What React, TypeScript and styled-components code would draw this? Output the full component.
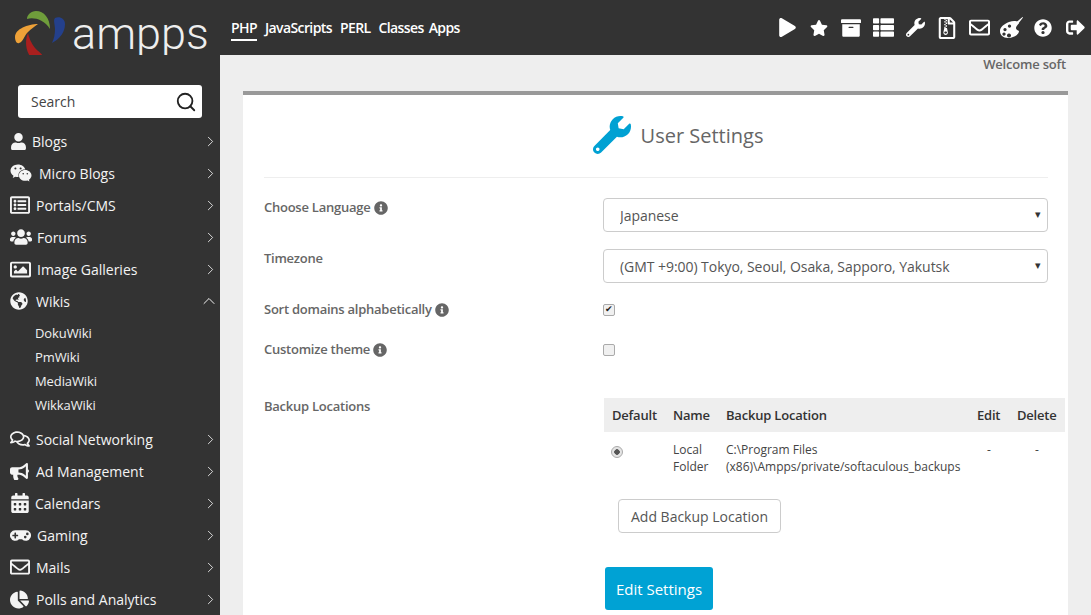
import React from 'react'
import styled, { createGlobalStyle } from 'styled-components'
import { ChevronRight, ChevronUp, Search } from 'lucide-react'
import {
    FaArchive,
    FaBullhorn,
    FaCalendarAlt,
    FaChartPie,
    FaGamepad,
    FaGlobeAmericas,
    FaInfoCircle,
    FaPlay,
    FaQuestionCircle,
    FaRegComments,
    FaRegEnvelope,
    FaRegFileArchive,
    FaRegImage,
    FaRegListAlt,
    FaSignOutAlt,
    FaStar,
    FaThList,
    FaUser,
    FaUsers,
    FaWeixin,
    FaWrench,
} from 'react-icons/fa'

const GlobalStyle = createGlobalStyle`
    html, body {
        margin: 0;
        height: 100%;
        overflow: hidden;
        background: #eeeeee;
        font-family: 'Open Sans', sans-serif;
    }
    * {
        box-sizing: border-box;
    }
`

const PaletteIcon = ({ size }: { size: number }) => (
    <svg width={size} height={size} viewBox="0 0 24 24" fill="currentColor">
        <path
            fillRule="evenodd"
            d="M10 6 C15 4 19 5 20 7 C19 9 17 10 17 12 C17 14 19 14 20 15 C20 19 14 22 9 22 C4 22 1 19 1 15 C1 11 5 8 10 6 Z M6 12 a1.6 1.6 0 1 0 0.01 0 Z M10.5 8.5 a1.6 1.6 0 1 0 0.01 0 Z M5 16.5 a1.6 1.6 0 1 0 0.01 0 Z M10 17.5 a2 2 0 1 0 0.01 0 Z"
        />
        <path d="M23.5 1 L24 1.6 L19 8 L16.5 7 Z" />
    </svg>
)

const topLinks = ['PHP', 'JavaScripts', 'PERL', 'Classes', 'Apps']

const topIcons = [
    { Icon: FaPlay, size: 19 },
    { Icon: FaStar, size: 18 },
    { Icon: FaArchive, size: 20 },
    { Icon: FaThList, size: 21 },
    { Icon: FaWrench, size: 19 },
    { Icon: FaRegFileArchive, size: 22 },
    { Icon: FaRegEnvelope, size: 21 },
    { Icon: PaletteIcon, size: 24 },
    { Icon: FaQuestionCircle, size: 18 },
    { Icon: FaSignOutAlt, size: 19 },
]

const upperMenu = [
    { label: 'Blogs', Icon: FaUser, size: 17, slot: 22 },
    { label: 'Micro Blogs', Icon: FaWeixin, size: 22, slot: 29 },
    { label: 'Portals/CMS', Icon: FaRegListAlt, size: 20, slot: 26 },
    { label: 'Forums', Icon: FaUsers, size: 22, slot: 27 },
    { label: 'Image Galleries', Icon: FaRegImage, size: 21, slot: 27 },
]

const wikiLinks = ['DokuWiki', 'PmWiki', 'MediaWiki', 'WikkaWiki']

const lowerMenu = [
    { label: 'Social Networking', Icon: FaRegComments, size: 20, slot: 26 },
    { label: 'Ad Management', Icon: FaBullhorn, size: 19, slot: 26 },
    { label: 'Calendars', Icon: FaCalendarAlt, size: 20, slot: 25 },
    { label: 'Gaming', Icon: FaGamepad, size: 21, slot: 27 },
    { label: 'Mails', Icon: FaRegEnvelope, size: 20, slot: 26 },
    { label: 'Polls and Analytics', Icon: FaChartPie, size: 19, slot: 26 },
]

const Logo = () => (
    <LogoSvg viewBox="0 0 70 64">
        <path d="M50 29 C50 18 44 11 36 11 C31 11 27 15 27 19 C33 17 44 19 50 29 Z" fill="#6f9d3b" />
        <path d="M38 24 C28 24 15 29 15 37 C15 41 17 44 19 43 C23 42 24 36 28 32 C31 29 35 26 38 24 Z" fill="#eea138" />
        <path d="M28 33 C24 42 26 54 34 61 C38 64 43 63 43 58 C43 53 38 52 35 48 C31 43 29 38 28 33 Z" fill="#a91f1e" />
        <path d="M52 43 C60 39 65 32 65 24 C65 18 59 16 55 18 C53 20 55 25 55 29 C55 34 54 39 52 43 Z" fill="#24408c" />
    </LogoSvg>
)

const LabelHint = () => (
    <HintIcon>
        <FaInfoCircle size={14} />
    </HintIcon>
)

export default function App() {
    return (
        <>
            <GlobalStyle />
            <Page>
                <Header>
                    <Brand>
                        <Logo />
                        <BrandName>ampps</BrandName>
                    </Brand>
                    <TopNav>
                        {topLinks.map((link, idx) => (
                            <TopLink key={link} $active={idx === 0}>
                                {link}
                            </TopLink>
                        ))}
                    </TopNav>
                    <TopIcons>
                        {topIcons.map(({ Icon, size }, idx) => (
                            <TopIconSlot key={idx}>
                                <Icon size={size} />
                            </TopIconSlot>
                        ))}
                    </TopIcons>
                </Header>
                <Body>
                    <Sidebar>
                        <SearchBox>
                            <SearchText>Search</SearchText>
                            <Search size={22} strokeWidth={2} color="#222" />
                        </SearchBox>
                        {upperMenu.map(({ label, Icon, size, slot }) => (
                            <MenuRow key={label}>
                                <MenuIcon $slot={slot}>
                                    <Icon size={size} />
                                </MenuIcon>
                                <MenuLabel>{label}</MenuLabel>
                                <ChevronRight size={17} strokeWidth={1.2} />
                            </MenuRow>
                        ))}
                        <MenuRow>
                            <MenuIcon $slot={26}>
                                <FaGlobeAmericas size={18} />
                            </MenuIcon>
                            <MenuLabel>Wikis</MenuLabel>
                            <ChevronUp size={20} strokeWidth={1.2} />
                        </MenuRow>
                        <SubMenu>
                            {wikiLinks.map((link) => (
                                <SubLink key={link}>{link}</SubLink>
                            ))}
                        </SubMenu>
                        {lowerMenu.map(({ label, Icon, size, slot }) => (
                            <MenuRow key={label}>
                                <MenuIcon $slot={slot}>
                                    <Icon size={size} />
                                </MenuIcon>
                                <MenuLabel>{label}</MenuLabel>
                                <ChevronRight size={17} strokeWidth={1.2} />
                            </MenuRow>
                        ))}
                    </Sidebar>
                    <Main>
                        <Welcome>Welcome soft</Welcome>
                        <Card>
                            <Title>
                                <FaWrench size={38} color="#00a1d3" />
                                <TitleText>User Settings</TitleText>
                            </Title>
                            <Field $height={51}>
                                <FieldLabel>
                                    Choose Language <LabelHint />
                                </FieldLabel>
                                <SelectBox>
                                    <Select defaultValue="ja">
                                        <option value="ja">Japanese</option>
                                    </Select>
                                </SelectBox>
                            </Field>
                            <Field $height={51}>
                                <FieldLabel>Timezone</FieldLabel>
                                <SelectBox>
                                    <Select defaultValue="tokyo">
                                        <option value="tokyo">(GMT +9:00) Tokyo, Seoul, Osaka, Sapporo, Yakutsk</option>
                                    </Select>
                                </SelectBox>
                            </Field>
                            <Field $height={40}>
                                <FieldLabel>
                                    Sort domains alphabetically <LabelHint />
                                </FieldLabel>
                                <CheckBox type="checkbox" defaultChecked />
                            </Field>
                            <Field $height={58}>
                                <FieldLabel>
                                    Customize theme <LabelHint />
                                </FieldLabel>
                                <CheckBox type="checkbox" />
                            </Field>
                            <Field>
                                <BackupLabel>Backup Locations</BackupLabel>
                                <div>
                                    <BackupTable>
                                        <thead>
                                            <tr>
                                                <HeadCell>Default</HeadCell>
                                                <HeadCell>Name</HeadCell>
                                                <HeadCell>Backup Location</HeadCell>
                                                <HeadCell>Edit</HeadCell>
                                                <HeadCell>Delete</HeadCell>
                                            </tr>
                                        </thead>
                                        <tbody>
                                            <tr>
                                                <BodyCell>
                                                    <RadioDot type="radio" defaultChecked />
                                                </BodyCell>
                                                <BodyCell>
                                                    Local
                                                    <br />
                                                    Folder
                                                </BodyCell>
                                                <BodyCell>
                                                    C:\Program Files
                                                    <br />
                                                    (x86)\Ampps/private/softaculous_backups
                                                </BodyCell>
                                                <DashCell>-</DashCell>
                                                <DashCell>-</DashCell>
                                            </tr>
                                        </tbody>
                                    </BackupTable>
                                    <AddButton>Add Backup Location</AddButton>
                                    <SaveButton>Edit Settings</SaveButton>
                                </div>
                            </Field>
                        </Card>
                    </Main>
                </Body>
            </Page>
        </>
    )
}

const Page = styled.div`
    height: 100vh;
    display: flex;
    flex-direction: column;
    overflow: hidden;
`

const Header = styled.header`
    flex: none;
    height: 55px;
    display: flex;
    align-items: flex-start;
    background: #333333;
    color: #ffffff;
`

const Brand = styled.div`
    width: 220px;
    height: 55px;
    flex: none;
    display: flex;
    align-items: flex-start;
`

const LogoSvg = styled.svg`
    flex: none;
    width: 70px;
    height: 64px;
`

const BrandName = styled.span`
    font-family: Roboto, 'Liberation Sans', sans-serif;
    font-weight: 300;
    font-size: 45px;
    line-height: 50px;
    margin: 9px 0 0 2px;
    color: #eeeeee;
`

const TopNav = styled.nav`
    display: flex;
    gap: 8px;
    padding: 18px 0 0 11px;
`

const TopLink = styled.a<{ $active: boolean }>`
    font-size: 14px;
    font-weight: 600;
    line-height: 19px;
    letter-spacing: -0.6px;
    padding-bottom: 3px;
    height: 23px;
    color: #ffffff;
    border-bottom: ${({ $active }) => ($active ? '2px solid #ffffff' : 'none')};

    &:last-child {
        margin-left: -3px;
    }
`

const TopIcons = styled.div`
    margin-left: auto;
    display: flex;
    align-items: center;
    height: 55px;
`

const TopIconSlot = styled.span`
    width: 32px;
    display: flex;
    justify-content: center;
`

const Body = styled.div`
    flex: 1;
    display: flex;
    min-height: 0;
`

const Sidebar = styled.aside`
    width: 220px;
    flex: none;
    background: #333333;
    color: #ffffff;
    padding-top: 30px;
`

const SearchBox = styled.div`
    width: 184px;
    height: 33px;
    margin: 0 0 7px 18px;
    padding: 0 5px 0 13px;
    display: flex;
    align-items: center;
    justify-content: space-between;
    background: #ffffff;
    border-radius: 3px;
`

const SearchText = styled.span`
    font-size: 14px;
    color: #444444;
`

const MenuRow = styled.div`
    height: 32px;
    display: flex;
    align-items: center;
    padding: 0 1px 0 10px;
    color: #f4f4f4;
`

const MenuIcon = styled.span<{ $slot: number }>`
    width: ${({ $slot }) => $slot}px;
    flex: none;
    display: flex;
    align-items: center;
`

const MenuLabel = styled.span`
    flex: 1;
    font-size: 14px;
    line-height: 19px;
`

const SubMenu = styled.div`
    padding: 4px 0 6px 35px;
`

const SubLink = styled.div`
    height: 24px;
    font-size: 13px;
    line-height: 24px;
    letter-spacing: -0.1px;
    color: #f0f0f0;
`

const Main = styled.main`
    flex: 1;
    min-width: 0;
    padding: 0 23px;
`

const Welcome = styled.div`
    height: 36px;
    padding-right: 2px;
    text-align: right;
    font-size: 13px;
    font-weight: 600;
    line-height: 19px;
    letter-spacing: -0.2px;
    color: #666666;
`

const Card = styled.section`
    background: #ffffff;
    border-top: 4px solid #999999;
    padding: 0 20px 24px 21px;
`

const Title = styled.div`
    height: 83px;
    margin-bottom: 20px;
    padding: 0 0 2px 44px;
    display: flex;
    align-items: center;
    justify-content: center;
    gap: 10px;
    border-bottom: 1px solid #eeeeee;
`

const TitleText = styled.h1`
    margin: 0;
    font-size: 20px;
    font-weight: 400;
    color: #666666;
`

const Field = styled.div<{ $height?: number }>`
    display: grid;
    grid-template-columns: 339px 445px;
    height: ${({ $height }) => ($height ? `${$height}px` : 'auto')};
`

const FieldLabel = styled.div`
    font-size: 13px;
    font-weight: 600;
    line-height: 18px;
    letter-spacing: -0.25px;
    color: #666666;
`

const BackupLabel = styled(FieldLabel)`
    margin-top: -1px;
`

const HintIcon = styled.span`
    display: inline-block;
    vertical-align: -3px;
`

const SelectBox = styled.div`
    position: relative;
    height: 34px;

    &::after {
        content: '▾';
        position: absolute;
        right: 7px;
        top: 8px;
        font-size: 11px;
        color: #333333;
    }
`

const Select = styled.select`
    appearance: none;
    width: 100%;
    height: 34px;
    padding: 0 16px;
    border: 1px solid #cccccc;
    border-radius: 4px;
    background: #ffffff;
    font-family: inherit;
    font-size: 14px;
    letter-spacing: -0.05px;
    color: #555555;
`

const CheckBox = styled.input`
    appearance: none;
    width: 12px;
    height: 12px;
    margin: 4px 0 0;
    position: relative;
    background: #f0f0f0;
    border: 1px solid #aaaaaa;
    border-radius: 2px;

    &:checked::after {
        content: '✔';
        position: absolute;
        left: 1px;
        top: -2px;
        font-size: 9px;
        line-height: 13px;
        color: #222222;
    }
`

const BackupTable = styled.table`
    width: 461px;
    margin-left: 1px;
    border-collapse: collapse;
    table-layout: fixed;
    color: #444444;

    th:nth-child(1) { width: 61px; }
    th:nth-child(2) { width: 53px; }
    th:nth-child(3) { width: 251px; }
    th:nth-child(4) { width: 40px; }
`

const HeadCell = styled.th`
    height: 34px;
    padding: 0 8px;
    background: #eeeeee;
    font-size: 13px;
    font-weight: 600;
    letter-spacing: -0.2px;
    text-align: left;
    color: #333333;
`

const BodyCell = styled.td`
    padding: 9px 0 0 8px;
    font-size: 12px;
    line-height: 17px;
    vertical-align: top;
    white-space: nowrap;
`

const DashCell = styled(BodyCell)`
    text-align: center;
    padding-left: 0;
`

const RadioDot = styled.input`
    appearance: none;
    display: block;
    width: 12px;
    height: 12px;
    margin: 5px 0 0 -1px;
    border: 1px solid #aaaaaa;
    border-radius: 50%;
    background: radial-gradient(circle, #555555 0 2.5px, #e4e4e4 3px);
`

const AddButton = styled.button`
    display: block;
    width: 163px;
    height: 34px;
    margin: 24px 0 0 15px;
    border: 1px solid #cccccc;
    border-radius: 4px;
    background: #ffffff;
    font-family: inherit;
    font-size: 14px;
    color: #555555;
`

const SaveButton = styled.button`
    display: block;
    width: 108px;
    height: 43px;
    margin: 34px 0 0 2px;
    border: none;
    border-radius: 3px;
    background: #00a2d4;
    font-family: inherit;
    font-size: 15px;
    color: #ffffff;
`
